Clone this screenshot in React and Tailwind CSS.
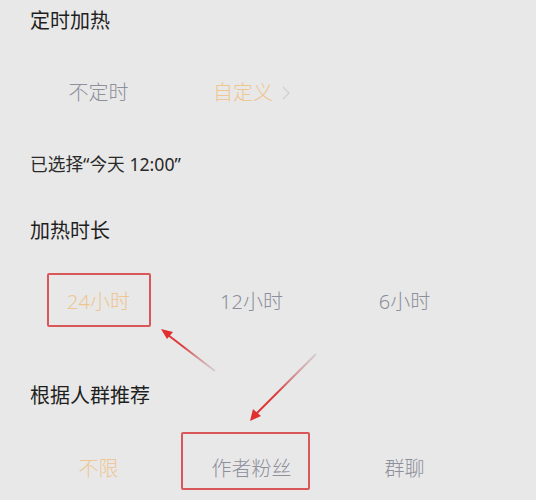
const FONT = { fontFamily: '"Noto Sans", "Noto Sans CJK SC", sans-serif' }

function Chevron() {
  return (
    <svg width="8" height="14" viewBox="0 0 8 14" className="ml-[9px]">
      <polyline points="1,1 7,7 1,13" fill="none" stroke="#cfcfcf" strokeWidth="1.2" />
    </svg>
  )
}

function OptionRow({ items, height, shift = '' }) {
  return (
    <div className={`ml-[22px] grid grid-cols-[153px_153px_153px] items-center ${height}`}>
      {items.map((it) => (
        <div key={it.label} className={`flex items-center justify-center ${shift}`}>
          <span className={`text-[20px] leading-none font-light ${it.active ? 'text-[#efc591]' : 'text-[#8d8f9b]'}`}>
            {it.label}
          </span>
          {it.more && <Chevron />}
        </div>
      ))}
    </div>
  )
}

function Arrows() {
  return (
    <svg className="absolute inset-0 pointer-events-none" width="536" height="500" viewBox="0 0 536 500">
      <defs>
        <linearGradient id="a1" x1="215" y1="371" x2="162" y2="330" gradientUnits="userSpaceOnUse">
          <stop offset="0" stopColor="#b9a9ad" stopOpacity="0.4" />
          <stop offset="0.6" stopColor="#dc3c3c" />
          <stop offset="1" stopColor="#e02f2f" />
        </linearGradient>
        <linearGradient id="a2" x1="316" y1="354" x2="251" y2="420" gradientUnits="userSpaceOnUse">
          <stop offset="0" stopColor="#b9a9ad" stopOpacity="0.4" />
          <stop offset="0.6" stopColor="#dc3c3c" />
          <stop offset="1" stopColor="#e02f2f" />
        </linearGradient>
      </defs>
      <line x1="215" y1="371" x2="168" y2="335" stroke="url(#a1)" strokeWidth="2" />
      <polygon points="161,329 173,332 167,339" fill="#e02f2f" />
      <line x1="316" y1="354" x2="256" y2="414" stroke="url(#a2)" strokeWidth="2" />
      <polygon points="250,421 253,409 261,416" fill="#e02f2f" />
    </svg>
  )
}

export default function App() {
  return (
    <div className="relative w-[536px] h-[500px] overflow-hidden bg-[#e8e8e8] text-[#1f1f1f]" style={FONT}>
      <div className="pt-[7px]">
        <div className="px-[30px] h-[28px] flex items-center text-[20px] leading-none">定时加热</div>

        <div className="mt-[38px]">
          <OptionRow
            height="h-[40px]"
            items={[
              { label: '不定时' },
              { label: '自定义', active: true, more: true },
            ]}
          />
        </div>

        <div className="mt-[38px] px-[30px] h-[28px] flex items-center text-[17.7px] leading-none text-[#2a2a2a]">
          已选择“今天 12:00”
        </div>

        <div className="mt-[38px] px-[30px] h-[28px] flex items-center text-[20px] leading-none">加热时长</div>

        <div className="mt-[28px]">
          <OptionRow
            height="h-[54px]"
            shift="pt-[4px]"
            items={[
              { label: '24小时', active: true },
              { label: '12小时' },
              { label: '6小时' },
            ]}
          />
        </div>

        <div className="mt-[55px] px-[30px] h-[28px] flex items-center text-[20px] leading-none">根据人群推荐</div>

        <div className="mt-[39px]">
          <OptionRow
            height="h-[40px]"
            items={[
              { label: '不限', active: true },
              { label: '作者粉丝' },
              { label: '群聊' },
            ]}
          />
        </div>
      </div>

      {/* annotation boxes */}
      <div className="absolute left-[47px] top-[273px] w-[104px] h-[54px] border-2 border-[#d9575a] rounded-[2px]" />
      <div className="absolute left-[181px] top-[432px] w-[129px] h-[58px] border-2 border-[#d9575a] rounded-[2px]" />
      <Arrows />
    </div>
  )
}
